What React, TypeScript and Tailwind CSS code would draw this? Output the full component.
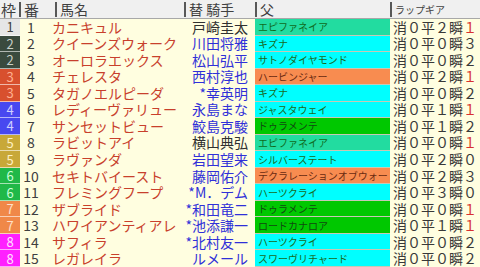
type Horse = {
  waku: number;
  num: number;
  name: string;
  jockey: string;
  dark?: boolean;
  sire: string;
  sireBg: "teal" | "cyan" | "orange" | "green";
  lap: [string, string, string];
};

const horses: Horse[] = [
  { waku: 1, num: 1, name: "カニキュル", jockey: "戸崎圭太", dark: true, sire: "エピファネイア", sireBg: "teal", lap: ["０", "２", "１"] },
  { waku: 2, num: 2, name: "クイーンズウォーク", jockey: "川田将雅", sire: "キズナ", sireBg: "cyan", lap: ["０", "０", "３"] },
  { waku: 2, num: 3, name: "オーロラエックス", jockey: "松山弘平", sire: "サトノダイヤモンド", sireBg: "cyan", lap: ["０", "０", "２"] },
  { waku: 3, num: 4, name: "チェレスタ", jockey: "西村淳也", sire: "ハービンジャー", sireBg: "orange", lap: ["０", "２", "１"] },
  { waku: 3, num: 5, name: "タガノエルピーダ", jockey: "*幸英明", sire: "キズナ", sireBg: "cyan", lap: ["０", "０", "２"] },
  { waku: 4, num: 6, name: "レディーヴァリュー", jockey: "永島まな", sire: "ジャスタウェイ", sireBg: "cyan", lap: ["０", "１", "１"] },
  { waku: 4, num: 7, name: "サンセットビュー", jockey: "鮫島克駿", sire: "ドゥラメンテ", sireBg: "green", lap: ["０", "１", "２"] },
  { waku: 5, num: 8, name: "ラビットアイ", jockey: "横山典弘", dark: true, sire: "エピファネイア", sireBg: "teal", lap: ["０", "０", "１"] },
  { waku: 5, num: 9, name: "ラヴァンダ", jockey: "岩田望来", sire: "シルバーステート", sireBg: "cyan", lap: ["０", "２", "０"] },
  { waku: 6, num: 10, name: "セキトバイースト", jockey: "藤岡佑介", sire: "デクラレーションオブウォー", sireBg: "orange", lap: ["０", "２", "３"] },
  { waku: 6, num: 11, name: "フレミングフープ", jockey: "*M．デム", sire: "ハーツクライ", sireBg: "cyan", lap: ["０", "３", "０"] },
  { waku: 7, num: 12, name: "ザブライド", jockey: "*和田竜二", sire: "ドゥラメンテ", sireBg: "green", lap: ["０", "０", "１"] },
  { waku: 7, num: 13, name: "ハワイアンティアレ", jockey: "*池添謙一", sire: "ロードカナロア", sireBg: "green", lap: ["０", "１", "１"] },
  { waku: 8, num: 14, name: "サフィラ", jockey: "*北村友一", sire: "ハーツクライ", sireBg: "cyan", lap: ["０", "０", "２"] },
  { waku: 8, num: 15, name: "レガレイラ", jockey: "ルメール", sire: "スワーヴリチャード", sireBg: "cyan", lap: ["０", "０", "２"] },
];

const wakuStyle: Record<number, string> = {
  1: "bg-[#e6e6e6] text-[#404040]",
  2: "bg-[#3a4a3e] text-[#c8d0c8]",
  3: "bg-[#d8502e] text-[#ffb090]",
  4: "bg-[#4848f0] text-[#d0d0ff]",
  5: "bg-[#c8a838] text-[#fff0c0]",
  6: "bg-[#20b848] text-[#c8ffd8]",
  7: "bg-[#f08848] text-[#ffe0c8]",
  8: "bg-[#ff20ff] text-[#ffe0ff]",
};

const sireStyle = {
  teal: "bg-[#22dca0] text-[#106a20]",
  cyan: "bg-[#00ffff] text-[#1a6a1a]",
  orange: "bg-[#f88c50] text-[#6a2a10]",
  green: "bg-[#00c800] text-[#104a10]",
};

const cols = "grid grid-cols-[20px_22px_142px_71px_135px_90px]";

const HeadCell = ({ label, className = "", divider = true }: { label: string; className?: string; divider?: boolean }) => (
  <div className={`flex items-center ${className}`}>
    {divider && <span className="mr-[3px] h-[15px] w-[2px] shrink-0 bg-[#585858]" />}
    {label}
  </div>
);

export default function App() {
  return (
    <div
      className="h-[267px] w-[480px] overflow-hidden bg-[#fffee0] text-[14px] leading-[15px]"
      style={{ fontFamily: '"Noto Sans CJK JP", "Noto Sans", sans-serif' }}
    >
      {/* header */}
      <div className={`${cols} h-[19px] border-b border-[#a8a8a8] bg-[#f0f0f0] text-[#404040]`}>
        <HeadCell label="枠" divider={false} className="pl-[1px] text-[15px]" />
        <HeadCell label="番" className="-ml-[1px] text-[15px]" />
        <HeadCell label="馬名" className="pl-[13px]" />
        <HeadCell label="替 騎手" />
        <HeadCell label="父" />
        <HeadCell label="ラップギア" className="text-[10px]" />
      </div>

      {/* rows */}
      <div className="grid h-[248px] grid-rows-[repeat(15,minmax(0,1fr))]">
        {horses.map((h) => (
          <div key={h.num} className={`${cols} min-h-0`}>
            <div className={`flex items-center justify-center border-b border-[#ffffff99] text-[13px] ${wakuStyle[h.waku]}`}>
              {h.waku}
            </div>
            <div className="flex items-center justify-center text-[#404040]">{h.num}</div>
            <div className="flex items-center pl-[10px] whitespace-nowrap text-[#c8402c]">{h.name}</div>
            <div
              className={`flex items-center justify-end pr-[7px] whitespace-nowrap ${
                h.dark ? "text-[#303030]" : "text-[#3030d8]"
              }`}
            >
              {h.jockey}
            </div>
            <div
              className={`flex items-center overflow-hidden pl-[3px] text-[10px] whitespace-nowrap border-b border-[#c8c8b4] ${sireStyle[h.sireBg]}`}
            >
              {h.sire}
            </div>
            <div className="flex items-center pl-[3px] whitespace-nowrap text-[#383838]">
              消{h.lap[0]}平{h.lap[1]}瞬
              <span className={h.lap[2] === "１" ? "text-[#d83030]" : ""}>{h.lap[2]}</span>
            </div>
          </div>
        ))}
      </div>
    </div>
  );
}
